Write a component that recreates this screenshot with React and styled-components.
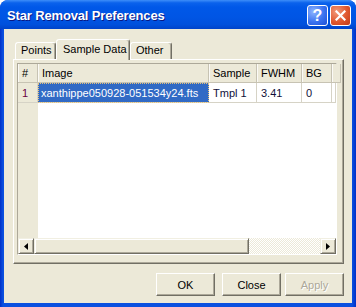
import styled, { createGlobalStyle } from "styled-components";

const GlobalStyle = createGlobalStyle`
  html, body {
    margin: 0;
    padding: 0;
    background: #fff;
  }
  body {
    font-family: "Liberation Sans", Arial, sans-serif;
    font-size: 11px;
  }
  * {
    box-sizing: border-box;
  }
`;

const Window = styled.div`
  width: 356px;
  height: 307px;
  display: flex;
  flex-direction: column;
  background: linear-gradient(to right, #0030c8 0, #0a50e0 3px, #0a50e0 352px, #0030c8 356px);
  border-radius: 8px 8px 0 0;
  overflow: hidden;
`;

const TitleBar = styled.div`
  height: 29px;
  flex: none;
  display: flex;
  align-items: center;
  padding: 2px 5px 0 7px;
  background: linear-gradient(
    to bottom,
    #3d8ef9 0%,
    #0a62ec 10%,
    #0058e8 25%,
    #0055e4 60%,
    #0050dc 85%,
    #0043c9 100%
  );
`;

const Title = styled.div`
  flex: 1;
  color: #fff;
  font-weight: bold;
  font-size: 13px;
  letter-spacing: -0.15px;
  text-shadow: 1px 1px 0 #0a1883;
  margin-top: -1px;
`;

const CaptionButton = styled.div`
  width: 21px;
  height: 21px;
  margin-left: 2px;
  border: 1px solid #fff;
  border-radius: 3px;
  display: flex;
  align-items: center;
  justify-content: center;
  color: #fff;
  font-weight: bold;
  font-size: 16px;
  background: ${(p) =>
    p.$close
      ? "radial-gradient(circle at 30% 30%, #f29a7a, #e0582f 55%, #c23a18)"
      : "radial-gradient(circle at 30% 30%, #8fb6ff, #3b73f0 55%, #1c4fd6)"};
`;

const Body = styled.div`
  flex: 1;
  min-height: 0;
  margin: 0 4px 4px;
  background: #ece9d8;
  display: flex;
  flex-direction: column;
  padding: 10px 8px 7px 9px;
`;

const TabStrip = styled.div`
  height: 20px;
  flex: none;
  display: flex;
  align-items: flex-end;
  padding-left: 2px;
  position: relative;
  z-index: 1;
`;

const Tab = styled.div`
  width: ${(p) => p.$w}px;
  height: ${(p) => (p.$active ? 21 : 17)}px;
  margin-bottom: ${(p) => (p.$active ? -1 : 0)}px;
  padding: ${(p) => (p.$active ? "3px 0 0 6px" : "1px 0 0 5px")};
  border: 1px solid;
  border-bottom: none;
  border-color: #fff #716f64 transparent #fff;
  border-radius: 3px 3px 0 0;
  background: #ece9d8;
  box-shadow: inset -1px 0 #aca899;
  color: #000;
  white-space: nowrap;
`;

const Panel = styled.div`
  flex: 1;
  min-height: 0;
  display: flex;
  flex-direction: column;
  border: 1px solid;
  border-color: #fff #716f64 #716f64 #fff;
  box-shadow: inset -1px -1px #aca899;
  padding: 3px 6px 8px 3px;
`;

const Grid = styled.div`
  flex: 1;
  min-height: 0;
  display: flex;
  flex-direction: column;
  border: 1px solid;
  border-color: #aca899 #fff #fff #aca899;
  background: #fff;
`;

const Row = styled.div`
  display: grid;
  grid-template-columns: 20px 171px 48px 45px 30px 1fr;
  height: ${(p) => p.$h}px;
  flex: none;
`;

const HeadCell = styled.div`
  background: #ece9d8;
  border-right: 1px solid #c7c3b3;
  border-bottom: 1px solid #c7c3b3;
  box-shadow: inset 1px 0 #fbfaf6;
  padding: 0 4px;
  display: flex;
  align-items: center;
  color: #000;
  white-space: nowrap;
  overflow: hidden;
`;

const Cell = styled.div`
  border-right: 1px solid #d6d3c6;
  border-bottom: 1px solid #d6d3c6;
  padding: 0 ${(p) => (p.$tight ? 0 : 4)}px 0 ${(p) => (p.$tight ? 3 : 4)}px;
  display: flex;
  align-items: center;
  white-space: nowrap;
  overflow: hidden;
  color: ${(p) => p.$color || "#10103a"};
  background: ${(p) => p.$bg || "#fff"};
`;

const SelectedCell = styled(Cell)`
  background: #316ac5;
  color: #fff;
  border-right-color: #316ac5;
  outline: 1px dotted #e6c27a;
  outline-offset: -1px;
  padding-left: 3px;
`;

const Mark = styled.span`
  width: 2px;
  height: 5px;
  border-radius: 1px 0 0 1px;
  background: #f0a030;
`;

const Filler = styled.div`
  flex: 1;
  min-height: 0;
  display: flex;
`;

const RowHeaderStrip = styled.div`
  width: 20px;
  background: #ece9d8;
`;

const ScrollBar = styled.div`
  height: 16px;
  flex: none;
  display: flex;
`;

const Raised = styled.div`
  width: ${(p) => (p.$w ? `${p.$w}px` : "auto")};
  height: 16px;
  background: #ece9d8;
  border: 1px solid;
  border-color: #f1efe2 #716f64 #716f64 #f1efe2;
  box-shadow: inset 1px 1px #fff, inset -1px -1px #aca899;
  display: flex;
  align-items: center;
  justify-content: center;
`;

const Track = styled.div`
  flex: 1;
  background: repeating-conic-gradient(#fff 0 25%, #ece9d8 0 50%) 0 0 / 2px 2px;
`;

const ButtonRow = styled.div`
  display: flex;
  justify-content: flex-end;
  gap: 4px;
  margin-top: 9px;
  height: 23px;
  flex: none;
`;

const Button = styled.div`
  width: 59px;
  height: 23px;
  margin-right: ${(p) => (p.$spaced ? 3 : 0)}px;
  background: #ece9d8;
  border: 1px solid;
  border-color: #fff #716f64 #716f64 #fff;
  box-shadow: inset -1px -1px #aca899;
  display: flex;
  align-items: center;
  justify-content: center;
  font-size: 11px;
  color: ${(p) => (p.$disabled ? "#aca899" : "#000")};
  text-shadow: ${(p) => (p.$disabled ? "1px 1px 0 #fff" : "none")};
`;

const Arrow = ({ dir }) => (
  <svg width="4" height="7" viewBox="0 0 4 7">
    <polygon
      points={dir === "left" ? "4,0 4,7 0,3.5" : "0,0 0,7 4,3.5"}
      fill="#000"
    />
  </svg>
);

const columns = ["#", "Image", "Sample", "FWHM", "BG", ""];

export default function App() {
  return (
    <>
      <GlobalStyle />
      <Window>
        <TitleBar>
          <Title>Star Removal Preferences</Title>
          <CaptionButton>?</CaptionButton>
          <CaptionButton $close>
            <svg width="11" height="11" viewBox="0 0 11 11">
              <path
                d="M1.5 1.5 L9.5 9.5 M9.5 1.5 L1.5 9.5"
                stroke="#fff"
                strokeWidth="2.2"
                strokeLinecap="square"
              />
            </svg>
          </CaptionButton>
        </TitleBar>
        <Body>
          <TabStrip>
            <Tab $w={41}>Points</Tab>
            <Tab $w={74} $active>
              Sample Data
            </Tab>
            <Tab $w={42}>Other</Tab>
          </TabStrip>
          <Panel>
            <Grid>
              <Row $h={19}>
                {columns.map((c, i) => (
                  <HeadCell key={i}>{c}</HeadCell>
                ))}
              </Row>
              <Row $h={20}>
                <Cell $bg="#ece9d8" $color="#6a0040">
                  1
                </Cell>
                <SelectedCell>xanthippe050928-051534y24.fts</SelectedCell>
                <Cell>Tmpl 1</Cell>
                <Cell>3.41</Cell>
                <Cell>0</Cell>
                <Cell $tight>
                  <Mark />
                </Cell>
              </Row>
              <Filler>
                <RowHeaderStrip />
              </Filler>
              <ScrollBar>
                <Raised $w={16}>
                  <Arrow dir="left" />
                </Raised>
                <Raised $w={215} />
                <Track />
                <Raised $w={16}>
                  <Arrow dir="right" />
                </Raised>
              </ScrollBar>
            </Grid>
          </Panel>
          <ButtonRow>
            <Button $spaced>OK</Button>
            <Button>Close</Button>
            <Button $disabled>Apply</Button>
          </ButtonRow>
        </Body>
      </Window>
    </>
  );
}
